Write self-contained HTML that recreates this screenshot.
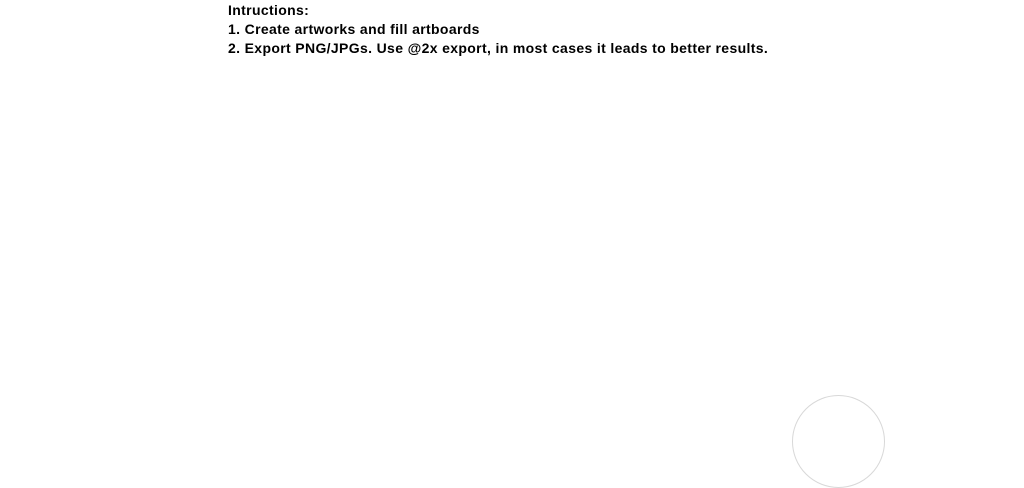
<!DOCTYPE html>
<html><head><style>
html,body{margin:0;padding:0;background:#fff;width:1024px;height:488px;overflow:hidden;}
.t{position:absolute;left:228px;top:1px;font-family:"Liberation Sans",sans-serif;font-weight:bold;font-size:14px;letter-spacing:0.35px;line-height:19px;color:#000;white-space:nowrap;}
.c{position:absolute;left:792px;top:395px;width:91px;height:91px;border:1px solid #d8d8d8;border-radius:50%;}
</style></head><body>
<div class="t">Intructions:<br>1. Create artworks and fill artboards<br>2. Export PNG/JPGs. Use @2x export, in most cases it leads to better results.</div>
<div class="c"></div>
</body></html>
